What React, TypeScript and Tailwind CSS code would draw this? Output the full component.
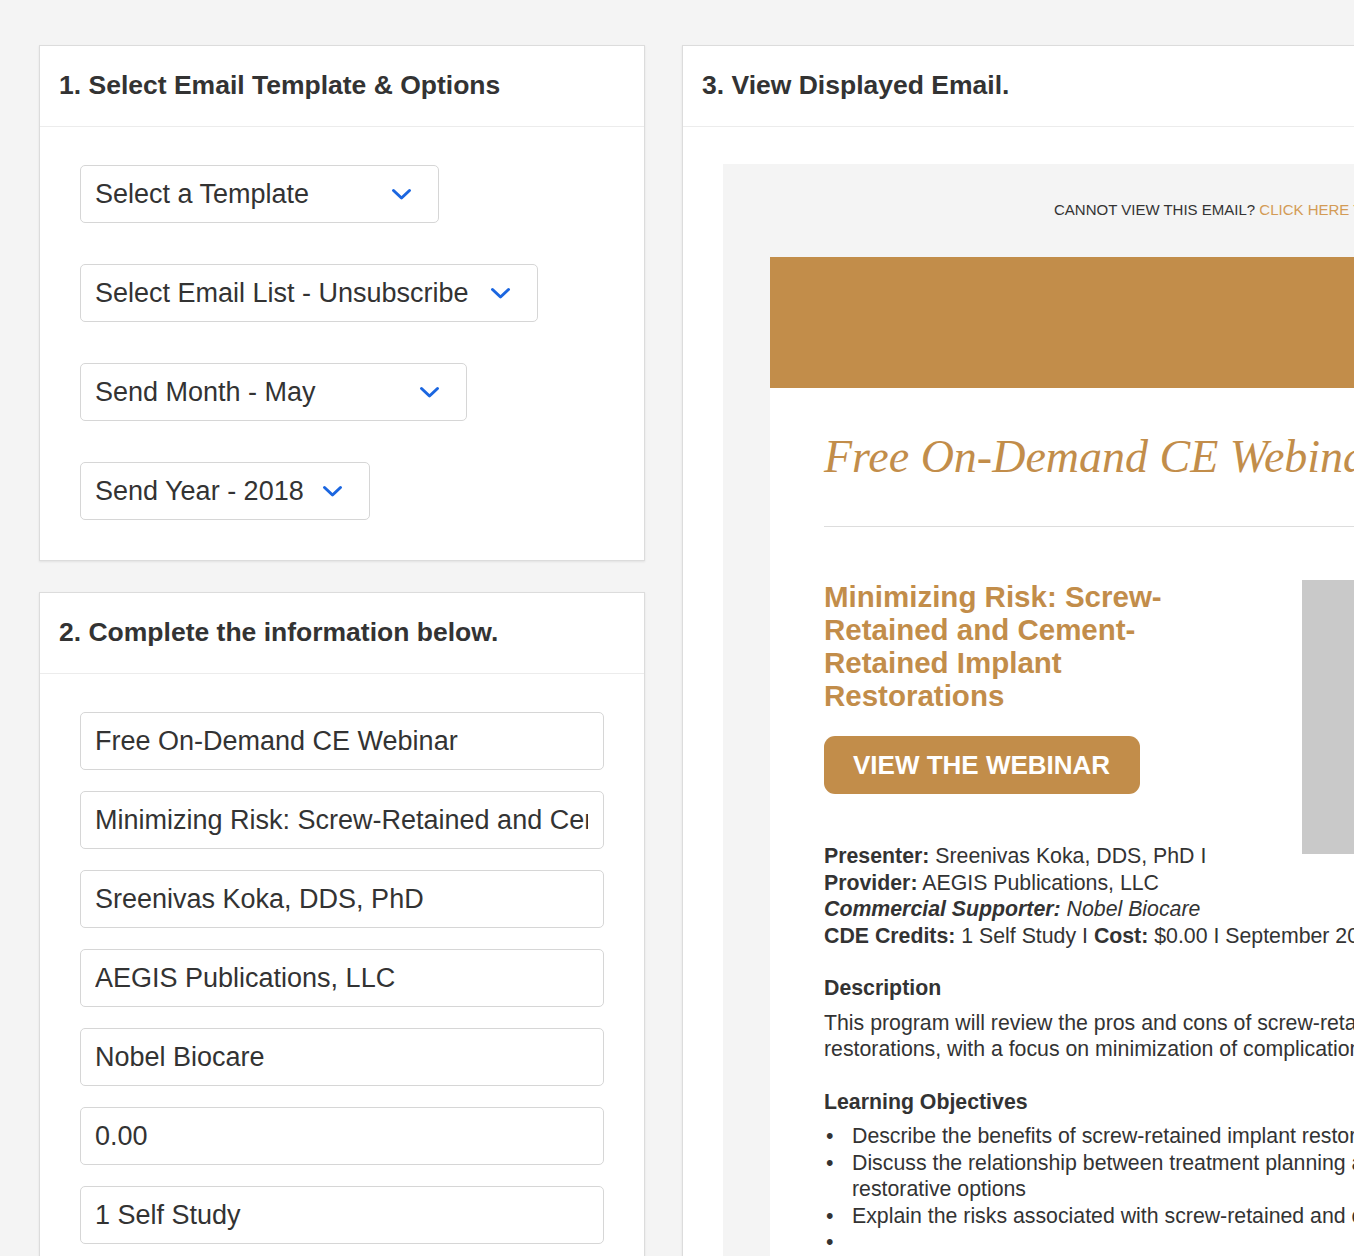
import React from "react";

const Chevron = () => (
  <svg width="21" height="13" viewBox="0 0 21 13" fill="none" className="shrink-0">
    <path d="M2.5 2.5 L10.5 10 L18.5 2.5" stroke="#1b66e0" strokeWidth="3" strokeLinecap="round" strokeLinejoin="round" />
  </svg>
);

const Select = ({ label, w }: { label: string; w: string }) => (
  <div className={`${w} h-[58px] flex items-center justify-between pl-[14px] pr-[26px] bg-white border border-[#d6d6d6] rounded-[5px] text-[27px] text-[#333] whitespace-nowrap`}>
    <span>{label}</span>
    <Chevron />
  </div>
);

const Input = ({ value }: { value: string }) => (
  <div className="w-[524px] h-[58px] flex items-center pl-[14px] pr-[15px] bg-white border border-[#d6d6d6] rounded-[5px] text-[27px] text-[#333]">
    <div className="overflow-hidden whitespace-nowrap w-full">{value}</div>
  </div>
);

const PanelHeader = ({ title }: { title: string }) => (
  <div className="h-[81px] flex items-center pl-[19px] border-b border-[#ececec]">
    <h2 className="text-[26.5px] font-bold text-[#333]">{title}</h2>
  </div>
);

export default function App() {
  return (
    <div className="w-[1354px] h-[1256px] overflow-hidden bg-[#f4f4f4] font-['Liberation_Sans',Arial,sans-serif] text-[#333]">
      <div className="flex items-start gap-[37px] pl-[39px] pt-[45px]">
        <div className="w-[606px] shrink-0 flex flex-col gap-[31px]">
          <div className="bg-white border border-[#dcdcdc] shadow-[0_1px_2px_rgba(0,0,0,0.08)]">
            <PanelHeader title="1. Select Email Template & Options" />
            <div className="pl-[40px] pt-[38px] pb-[40px] flex flex-col gap-[41px]">
              <Select label="Select a Template" w="w-[359px]" />
              <Select label="Select Email List - Unsubscribe" w="w-[458px]" />
              <Select label="Send Month - May" w="w-[387px]" />
              <Select label="Send Year - 2018" w="w-[290px]" />
            </div>
          </div>
          <div className="bg-white border border-[#dcdcdc] shadow-[0_1px_2px_rgba(0,0,0,0.08)] h-[720px]">
            <PanelHeader title="2. Complete the information below." />
            <div className="pl-[40px] pt-[38px] flex flex-col gap-[21px]">
              <Input value="Free On-Demand CE Webinar" />
              <Input value="Minimizing Risk: Screw-Retained and Cement-Retained Implant Restorations" />
              <Input value="Sreenivas Koka, DDS, PhD" />
              <Input value="AEGIS Publications, LLC" />
              <Input value="Nobel Biocare" />
              <Input value="0.00" />
              <Input value="1 Self Study" />
            </div>
          </div>
        </div>

        <div className="w-[900px] shrink-0 h-[1300px] bg-white border border-[#dcdcdc] shadow-[0_1px_2px_rgba(0,0,0,0.08)]">
          <PanelHeader title="3. View Displayed Email." />
          <div className="pl-[40px] pr-[40px] pt-[37px]">
            <div className="bg-[#f4f4f4] pt-[37px] px-[47px] h-[1200px]">
              <div className="pl-[284px] text-[15px] leading-[17px] text-[#333] uppercase whitespace-nowrap">
                Cannot view this email? <span className="text-[#d39b55]">Click here to view it in your browser</span>
              </div>
              <div className="mt-[39px] h-[131px] bg-[#c28d4a]" />
              <div className="bg-white px-[54px] pt-[43px] h-[1000px]">
                <div className="font-['Liberation_Serif','Times_New_Roman',serif] italic text-[46px] leading-[52px] text-[#c28d4a] whitespace-nowrap">
                  Free On-Demand CE Webinar
                </div>
                <div className="mt-[43px] border-t border-[#dddddd]" />
                <div className="mt-[53px]">
                  <div className="float-right w-[138px] h-[274px] bg-[#c9c9c9]" />
                  <div className="w-[400px] text-[29.5px] leading-[33px] font-bold text-[#c28d4a]">
                    Minimizing Risk: Screw-Retained and Cement-Retained Implant Restorations
                  </div>
                  <div className="mt-[24px] w-[316px] h-[58px] rounded-[11px] bg-[#c28d4a] flex items-center pl-[29px] text-white font-bold text-[26px] whitespace-nowrap">
                    VIEW THE WEBINAR
                  </div>
                  <div className="mt-[49px] text-[21.3px] leading-[26.5px] text-[#333] whitespace-nowrap">
                    <div><b>Presenter:</b> Sreenivas Koka, DDS, PhD I</div>
                    <div><b>Provider:</b> AEGIS Publications, LLC</div>
                    <div className="italic"><b>Commercial Supporter:</b> Nobel Biocare</div>
                    <div><b>CDE Credits:</b> 1 Self Study I <b>Cost:</b> $0.00 I September 2018</div>
                  </div>
                  <div className="mt-[26px] text-[21.3px] leading-[26.5px] font-bold">Description</div>
                  <div className="mt-[8px] text-[21.3px] leading-[26.5px] whitespace-nowrap">
                    <div>This program will review the pros and cons of screw-retained and cement-retained implant</div>
                    <div>restorations, with a focus on minimization of complications.</div>
                  </div>
                  <div className="mt-[26px] text-[21.3px] leading-[26.5px] font-bold">Learning Objectives</div>
                  <ul className="mt-[8px] text-[21.3px] leading-[26.5px]">
                    <li className="flex"><span className="w-[28px] pl-[2px] shrink-0">•</span><span className="whitespace-nowrap">Describe the benefits of screw-retained implant restorations</span></li>
                    <li className="flex"><span className="w-[28px] pl-[2px] shrink-0">•</span><span className="whitespace-nowrap">Discuss the relationship between treatment planning and<br />restorative options</span></li>
                    <li className="flex"><span className="w-[28px] pl-[2px] shrink-0">•</span><span className="whitespace-nowrap">Explain the risks associated with screw-retained and cement-retained restorations</span></li>
                    <li className="flex"><span className="w-[28px] pl-[2px] shrink-0">•</span><span></span></li>
                  </ul>
                </div>
              </div>
            </div>
          </div>
        </div>
      </div>
    </div>
  );
}
